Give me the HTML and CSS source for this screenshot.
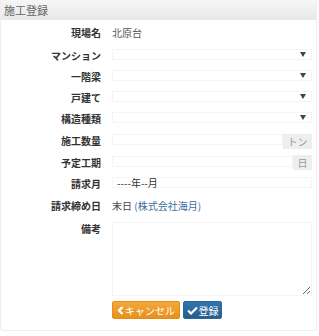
FILE: index.html
```html
<!DOCTYPE html>
<html lang="ja">
<head>
<meta charset="utf-8">
<link rel="stylesheet" href="styles.css">
</head>
<body>
<div class="panel">
  <div class="head">施工登録</div>
  <div class="form">
    <div class="lbl">現場名</div>
    <div class="val">北原台</div>

    <div class="lbl">マンション</div>
    <div><div class="box sel"><span class="arrow"></span></div></div>

    <div class="lbl">一階梁</div>
    <div><div class="box sel"><span class="arrow"></span></div></div>

    <div class="lbl">戸建て</div>
    <div><div class="box sel"><span class="arrow"></span></div></div>

    <div class="lbl">構造種類</div>
    <div><div class="box sel"><span class="arrow"></span></div></div>

    <div class="lbl">施工数量</div>
    <div class="group"><div class="box grow"></div><div class="addon ton">トン</div></div>

    <div class="lbl">予定工期</div>
    <div class="group"><div class="box grow"></div><div class="addon day">日</div></div>

    <div class="lbl">請求月</div>
    <div><div class="box month">----年--月</div></div>

    <div class="lbl">請求締め日</div>
    <div class="val dark">末日 <span class="blue">(株式会社海月)</span></div>

    <div class="lbl">備考</div>
    <div><textarea class="memo"></textarea></div>

    <div class="btns">
      <button class="btn orange"><svg width="7" height="9" viewBox="0 0 7 9"><polyline points="5.5,1 2,4.5 5.5,8" fill="none" stroke="#fff" stroke-width="2.2"/></svg>キャンセル</button>
      <button class="btn blue"><svg width="11" height="9" viewBox="0 0 11 9"><polyline points="1,4.5 4,7.5 10,1.5" fill="none" stroke="#fff" stroke-width="2.2"/></svg>登録</button>
    </div>
  </div>
</div>
</body>
</html>
```
FILE: styles.css
```css
html, body {
  margin: 0;
  padding: 0;
  background: #fff;
}
body {
  font-family: "Noto Sans CJK JP", "Noto Sans", sans-serif;
  color: #333;
}
.panel {
  width: 317px;
  height: 331px;
  box-sizing: border-box;
  border: 1px solid #efefef;
  border-top: none;
  border-radius: 0 0 3px 3px;
}
.head {
  height: 20px;
  background: linear-gradient(#f6f6f6, #e8e8e8);
  font-size: 11px;
  line-height: 20px;
  color: #666;
  padding-left: 3px;
}
.form {
  display: grid;
  grid-template-columns: 100px 1fr;
  grid-template-rows: 23px 21px 21px 21px 22px 22px 21px 22px 23px 81px auto;
  column-gap: 11px;
  padding: 4px 4px 0 0;
}
.lbl {
  font-size: 10px;
  font-weight: bold;
  line-height: 18px;
  text-align: right;
  color: #333;
}
.val {
  font-size: 10px;
  line-height: 18px;
  color: #555;
}
.val.dark {
  color: #444;
}
.blue {
  color: #3a6d9e;
}
.box {
  margin-top: 2px;
  height: 11px;
  box-sizing: border-box;
  border: 1px solid #f4f4f4;
  position: relative;
}
.arrow {
  position: absolute;
  right: 5px;
  top: 2px;
  width: 0;
  height: 0;
  border-left: 3.5px solid transparent;
  border-right: 3.5px solid transparent;
  border-top: 5px solid #444;
}
.group {
  display: flex;
  align-items: flex-start;
}
.grow {
  flex: 1;
}
.addon {
  margin-top: 2px;
  height: 15px;
  background: #eeeeee;
  color: #999;
  font-size: 10px;
  line-height: 15px;
  text-align: center;
}
.ton {
  width: 29px;
}
.day {
  width: 19px;
  margin-top: 1px;
}
.month {
  font-size: 10px;
  line-height: 9px;
  padding-left: 4px;
  color: #333;
}
.memo {
  display: block;
  margin: 2px 0 0 0;
  width: 100%;
  height: 74px;
  box-sizing: border-box;
  border: 1px solid #f4f4f4;
  resize: vertical;
  outline: none;
}
.btns {
  grid-column: 2;
  display: flex;
  gap: 3px;
}
.btn {
  height: 18px;
  border-radius: 2px;
  font-family: "Noto Sans CJK JP", sans-serif;
  font-size: 10px;
  color: #fff;
  display: flex;
  align-items: center;
  justify-content: center;
  gap: 1px;
  padding: 0;
  cursor: pointer;
}
.orange {
  width: 68px;
  background: linear-gradient(#f3a73c, #e8911d);
  border: 1px solid #e38d13;
}
.blue.btn, .btn.blue {
  width: 39px;
  background: linear-gradient(#3275ad, #275d8d);
  border: 1px solid #2b6699;
  color: #fff;
}
```
